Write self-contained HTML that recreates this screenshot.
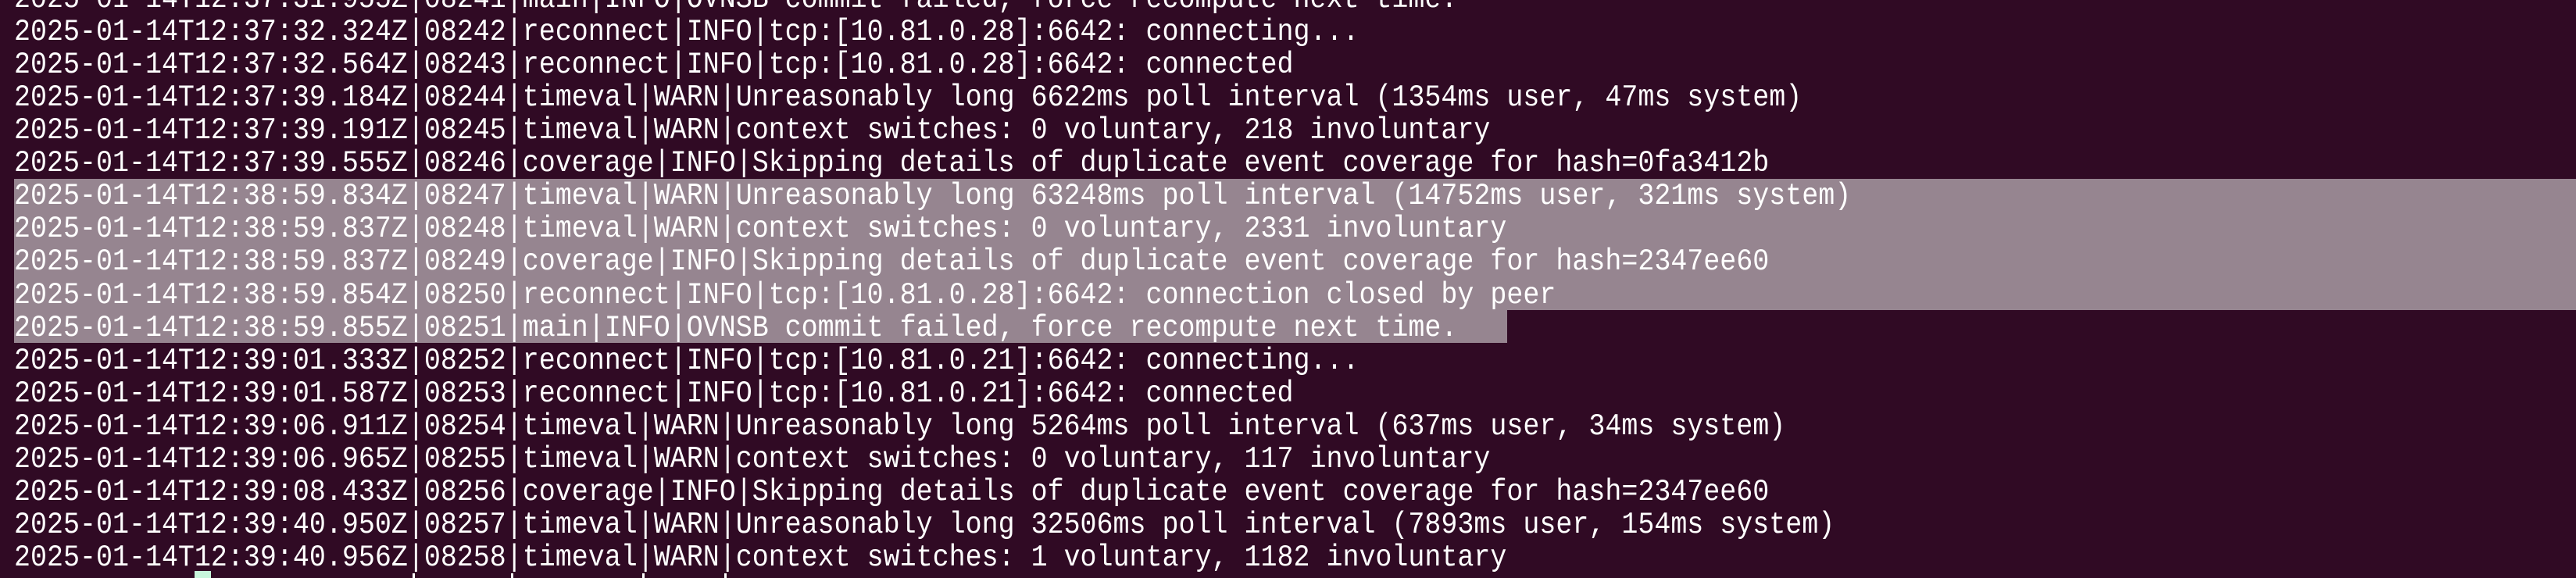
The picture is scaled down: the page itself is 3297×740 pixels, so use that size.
<!DOCTYPE html>
<html><head><meta charset="utf-8"><style>
html,body{margin:0;padding:0;width:3297px;height:740px;overflow:hidden;}
body{background:#300a24;position:relative;}
#w{position:absolute;left:0;top:0;width:3297px;height:740px;overflow:hidden;}
.l{position:absolute;left:18px;height:42.06px;line-height:42.06px;white-space:pre;font-family:"Liberation Mono",monospace;font-size:39px;color:#ffffff;transform-origin:0 50%;transform:scaleX(0.897);}
.hl{position:absolute;background:#968590;}
.cur{position:absolute;left:249px;top:731px;width:21px;height:9px;background:#c8f5dc;}
.bar{position:absolute;top:734px;width:3px;height:6px;background:#ffffff;}
</style></head><body><div id="w">
<div class="hl" style="left:18px;top:229px;width:3279px;height:168.3px;"></div>
<div class="hl" style="left:18px;top:397px;width:1911px;height:42px;"></div>
<div class="l" style="top:-22px">2025-01-14T12:37:31.955Z|08241|main|INFO|OVNSB commit failed, force recompute next time.</div>
<div class="l" style="top:20.06px">2025-01-14T12:37:32.324Z|08242|reconnect|INFO|tcp:[10.81.0.28]:6642: connecting...</div>
<div class="l" style="top:62.12px">2025-01-14T12:37:32.564Z|08243|reconnect|INFO|tcp:[10.81.0.28]:6642: connected</div>
<div class="l" style="top:104.18px">2025-01-14T12:37:39.184Z|08244|timeval|WARN|Unreasonably long 6622ms poll interval (1354ms user, 47ms system)</div>
<div class="l" style="top:146.24px">2025-01-14T12:37:39.191Z|08245|timeval|WARN|context switches: 0 voluntary, 218 involuntary</div>
<div class="l" style="top:188.3px">2025-01-14T12:37:39.555Z|08246|coverage|INFO|Skipping details of duplicate event coverage for hash=0fa3412b</div>
<div class="l" style="top:230.36px">2025-01-14T12:38:59.834Z|08247|timeval|WARN|Unreasonably long 63248ms poll interval (14752ms user, 321ms system)</div>
<div class="l" style="top:272.42px">2025-01-14T12:38:59.837Z|08248|timeval|WARN|context switches: 0 voluntary, 2331 involuntary</div>
<div class="l" style="top:314.48px">2025-01-14T12:38:59.837Z|08249|coverage|INFO|Skipping details of duplicate event coverage for hash=2347ee60</div>
<div class="l" style="top:356.54px">2025-01-14T12:38:59.854Z|08250|reconnect|INFO|tcp:[10.81.0.28]:6642: connection closed by peer</div>
<div class="l" style="top:398.6px">2025-01-14T12:38:59.855Z|08251|main|INFO|OVNSB commit failed, force recompute next time.</div>
<div class="l" style="top:440.66px">2025-01-14T12:39:01.333Z|08252|reconnect|INFO|tcp:[10.81.0.21]:6642: connecting...</div>
<div class="l" style="top:482.72px">2025-01-14T12:39:01.587Z|08253|reconnect|INFO|tcp:[10.81.0.21]:6642: connected</div>
<div class="l" style="top:524.78px">2025-01-14T12:39:06.911Z|08254|timeval|WARN|Unreasonably long 5264ms poll interval (637ms user, 34ms system)</div>
<div class="l" style="top:566.84px">2025-01-14T12:39:06.965Z|08255|timeval|WARN|context switches: 0 voluntary, 117 involuntary</div>
<div class="l" style="top:608.9px">2025-01-14T12:39:08.433Z|08256|coverage|INFO|Skipping details of duplicate event coverage for hash=2347ee60</div>
<div class="l" style="top:650.96px">2025-01-14T12:39:40.950Z|08257|timeval|WARN|Unreasonably long 32506ms poll interval (7893ms user, 154ms system)</div>
<div class="l" style="top:693.02px">2025-01-14T12:39:40.956Z|08258|timeval|WARN|context switches: 1 voluntary, 1182 involuntary</div>
<div class="cur"></div>
<div class="bar" style="left:528px"></div>
<div class="bar" style="left:654px"></div>
<div class="bar" style="left:822px"></div>
<div class="bar" style="left:927px"></div>
</div></body></html>
